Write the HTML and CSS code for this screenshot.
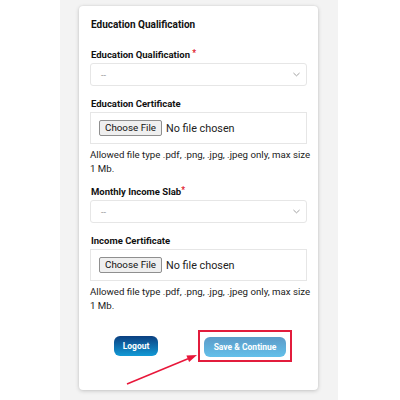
FILE: index.html
```html
<!DOCTYPE html>
<html>
<head>
<meta charset="utf-8">
<link rel="stylesheet" href="styles.css">
</head>
<body>
<div class="band">
  <div class="card">
    <h2 class="title">Education Qualification</h2>
    <div class="group">
      <label class="label">Education Qualification <span class="req">*</span></label>
      <div class="select"><span>--</span><svg class="chev" viewBox="0 0 8 5" width="7" height="5"><path d="M0.5 0.8 L4 4 L7.5 0.8" fill="none" stroke="#888" stroke-width="0.9"/></svg></div>
    </div>
    <div class="group">
      <label class="label">Education Certificate</label>
      <div class="file"><span class="choose">Choose File</span><span class="nofile">No file chosen</span></div>
      <p class="help">Allowed file type .pdf, .png, .jpg, .jpeg only, max size 1 Mb.</p>
    </div>
    <div class="group">
      <label class="label">Monthly Income Slab<span class="req">*</span></label>
      <div class="select"><span>--</span><svg class="chev" viewBox="0 0 8 5" width="7" height="5"><path d="M0.5 0.8 L4 4 L7.5 0.8" fill="none" stroke="#888" stroke-width="0.9"/></svg></div>
    </div>
    <div class="group">
      <label class="label">Income Certificate</label>
      <div class="file"><span class="choose">Choose File</span><span class="nofile">No file chosen</span></div>
      <p class="help">Allowed file type .pdf, .png, .jpg, .jpeg only, max size 1 Mb.</p>
    </div>
    <div class="actions">
      <button class="btn logout">Logout</button>
      <div class="highlight"><button class="btn save">Save &amp; Continue</button></div>
    </div>
    <svg class="arrow" width="80" height="42" viewBox="0 0 80 42">
      <line x1="4" y1="38" x2="65" y2="12.8" stroke="#e8173a" stroke-width="1.5"/>
      <path d="M74 9 L66.1 16 L63.4 9.6 Z" fill="#e8173a"/>
    </svg>
  </div>
</div>
</body>
</html>
```
FILE: styles.css
```css
* { box-sizing: border-box; }
html, body { margin: 0; padding: 0; background: #fff; }
body { font-family: Roboto, "Noto Sans", sans-serif; color: #111; }
.band {
  width: 278px;
  height: 400px;
  margin-left: 60px;
  background: #f3f3f3;
  padding: 6px 0 0 19px;
}
.card {
  position: relative;
  width: 239px;
  height: 384px;
  background: #fff;
  border-radius: 4px;
  box-shadow: 0 1px 4px rgba(0,0,0,0.18), 0 0 2px rgba(0,0,0,0.08);
  padding: 12px 11px 0 11px;
}
.title { margin: 0 0 18px 1px; font-size: 10px; font-weight: 700; line-height: 13px; }
.group { margin-bottom: 12px; }
.label { display: block; font-size: 9.5px; font-weight: 700; line-height: 12px; margin-bottom: 2px; margin-left: 1px; }
.req { color: #e0192b; font-size: 8.5px; vertical-align: top; position: relative; top: -2px; }
.select {
  height: 23px;
  border: 1px solid #e6e6e6;
  border-radius: 3px;
  display: flex;
  align-items: center;
  justify-content: space-between;
  padding: 0 6px 0 10px;
  font-size: 9px;
  color: #999;
}
.file {
  height: 32px;
  border: 1px solid #e6e6e6;
  display: flex;
  align-items: center;
  padding: 0 8px;
}
.choose {
  background: #efefef;
  border: 1px solid #8f8f8f;
  border-radius: 2px;
  padding: 0 5px;
  height: 16px;
  line-height: 14px;
  font-size: 9.8px;
  color: #111;
}
.nofile { margin-left: 4px; color: #222; font-size: 10.8px; }
.help { margin: 4px -6px -2px 0; font-size: 9.7px; line-height: 14px; color: #222; }
.actions { display: flex; align-items: center; margin-top: 19px; padding-left: 24px; }
.btn {
  border: none;
  border-radius: 6px;
  height: 20px;
  color: #fff;
  font-family: Roboto, sans-serif;
  font-weight: 700;
  font-size: 8.5px;
  padding: 0;
}
.logout { width: 44px; background: linear-gradient(#0b3f80, #129ad6); }
.highlight { margin-left: 40px; border: 2px solid #e21c3c; padding: 3px 4px; }
.save { width: 82px; background: linear-gradient(#5c9bc8, #62c0ea); }
.arrow { position: absolute; left: 44px; top: 340px; }
```
